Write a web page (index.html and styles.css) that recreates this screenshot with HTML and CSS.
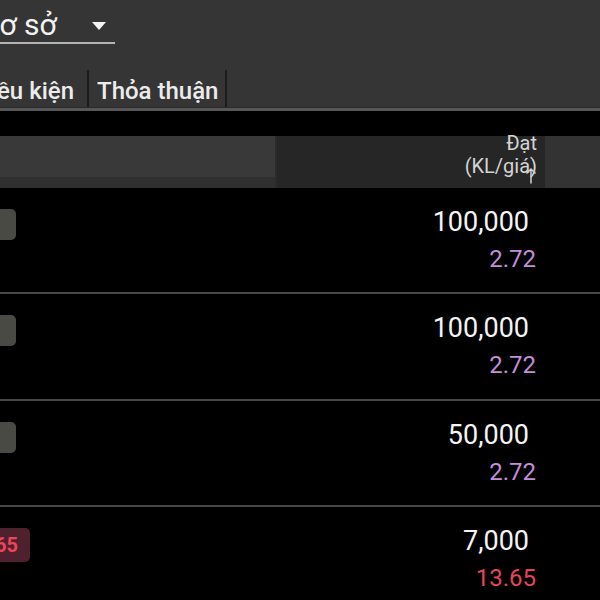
FILE: index.html
```html
<!DOCTYPE html>
<html lang="vi">
<head>
<meta charset="utf-8">
<link rel="stylesheet" href="styles.css">
</head>
<body>
<div class="page">
  <div class="top">
    <div class="dropdown">
      <span class="dd-text">Cơ sở</span>
      <span class="dd-arrow"></span>
    </div>
    <div class="tabs">
      <div class="tab tab-first"><span class="tab-clip">Điều kiện</span></div>
      <div class="tab">Thỏa thuận</div>
    </div>
  </div>
  <div class="table">
    <div class="head">
      <div class="c1 h1"></div>
      <div class="c2 h2">
        <div class="htext">Đạt<br>(KL/giá)</div>
        <svg class="sort" width="12" height="17" viewBox="0 0 12 17"><path d="M6 16.5V2M1.5 6.5L6 2l4.5 4.5" fill="none" stroke="#d0d0d0" stroke-width="1.5"/></svg>
      </div>
      <div class="c3 h3"></div>
    </div>
    <div class="row">
      <div class="c1"><div class="bclip w16"><span class="badge gray">2.72</span></div></div>
      <div class="c2"><div class="qty">100,000</div><div class="price purple">2.72</div></div>
      <div class="c3"></div>
    </div>
    <div class="row">
      <div class="c1"><div class="bclip w16"><span class="badge gray">2.72</span></div></div>
      <div class="c2"><div class="qty">100,000</div><div class="price purple">2.72</div></div>
      <div class="c3"></div>
    </div>
    <div class="row">
      <div class="c1"><div class="bclip w16"><span class="badge gray">2.72</span></div></div>
      <div class="c2"><div class="qty">50,000</div><div class="price purple">2.72</div></div>
      <div class="c3"></div>
    </div>
    <div class="row">
      <div class="c1"><div class="bclip w30"><span class="badge red">13.65</span></div></div>
      <div class="c2"><div class="qty">7,000</div><div class="price redtxt">13.65</div></div>
      <div class="c3"></div>
    </div>
  </div>
</div>
</body>
</html>
```
FILE: styles.css
```css
* { box-sizing: border-box; }
html, body {
  margin: 0;
  padding: 0;
  background: #000;
}
body {
  width: 600px;
  height: 600px;
  overflow: hidden;
  font-family: Roboto, "Noto Sans", sans-serif;
  color: #f2f2f2;
}
.page {
  width: 600px;
  height: 600px;
  overflow: hidden;
}
.top {
  background: #353535;
  height: 111px;
  border-bottom: 3px solid #575757;
  box-shadow: inset 0 -1px 0 #2a2a2a;
  overflow: hidden;
}
.dropdown {
  width: 115px;
  height: 44px;
  padding-top: 8px;
  border-bottom: 2px solid #b4b4b4;
  display: flex;
  align-items: flex-start;
}
.dd-text {
  font-size: 30px;
  line-height: 33px;
  margin-left: -20px;
  color: #f2f2f2;
  white-space: nowrap;
}
.dd-arrow {
  margin-left: auto;
  margin-right: 9px;
  margin-top: 14px;
  width: 0;
  height: 0;
  border-left: 7px solid transparent;
  border-right: 7px solid transparent;
  border-top: 8px solid #f4f4f4;
}
.tabs {
  display: flex;
  margin-top: 26px;
  height: 37px;
}
.tab {
  height: 37px;
  padding: 6px 7px 0 8px;
  font-size: 24px;
  line-height: 30px;
  font-weight: 500;
  white-space: nowrap;
  border-right: 2px solid #1c1c1c;
  color: #ececec;
}
.tab-first {
  width: 89px;
  padding: 6px 13px 0 0;
  overflow: hidden;
  display: flex;
  justify-content: flex-end;
}
.tab-clip {
  flex-shrink: 0;
}
.table {
  margin-top: 25px;
}
.head, .row {
  display: flex;
}
.head {
  height: 51.5px;
}
.c1 {
  width: 277px;
  flex-shrink: 0;
}
.c2 {
  width: 268px;
  flex-shrink: 0;
  text-align: right;
}
.c3 {
  flex: 1;
}
.h1 {
  background: linear-gradient(#393939 0 78%, #303030 78%);
  border-right: 2px solid #2b2b2b;
}
.h2 {
  background: #262626;
  position: relative;
  padding-right: 8px;
}
.h3 {
  background: #333333;
}
.htext {
  font-size: 20px;
  line-height: 23px;
  color: #d4d4d4;
  margin-top: -4px;
}
.sort {
  position: absolute;
  right: 8px;
  top: 31px;
}
.row {
  height: 106.5px;
  border-bottom: 2px solid #484848;
}
.bclip {
  display: flex;
  justify-content: flex-end;
  margin-top: 21px;
}
.w16 { width: 16px; }
.w30 { width: 30px; }
.badge {
  flex-shrink: 0;
  border-radius: 5px;
  font-size: 20px;
  font-weight: 700;
  white-space: nowrap;
  padding: 0 12px;
}
.gray {
  background: #4a4a45;
  color: #4a4a45;
  height: 31px;
  line-height: 31px;
}
.red {
  background: #4f202d;
  color: #ee4459;
  height: 34px;
  line-height: 34px;
}
.c2 .qty {
  padding-top: 19px;
  font-size: 27px;
  line-height: 30px;
  padding-right: 16px;
  color: #f4f4f4;
}
.c2 .price {
  margin-top: 6px;
  font-size: 24px;
  line-height: 32px;
  padding-right: 9px;
}
.purple { color: #c68ddc; }
.redtxt { color: #e4455a; }
```
